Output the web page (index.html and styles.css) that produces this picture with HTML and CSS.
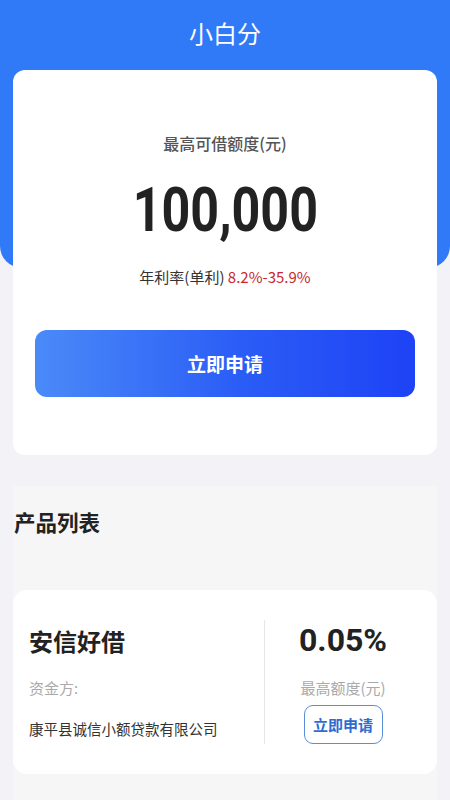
FILE: index.html
```html
<!DOCTYPE html>
<html lang="zh-CN">
<head>
    <meta charset="UTF-8">
    <meta name="viewport" content="width=device-width, initial-scale=1.0">
    <title>小白分</title>
    <link rel="stylesheet" href="styles.css">
</head>
<body>
    <div class="header">
        <div class="title">小白分</div>
    </div>

    <div class="content">
        <div class="quota-card">
            <div class="quota-label">最高可借额度(元)</div>
            <div class="quota-amount"><span class="amount-num">100,000</span></div>
            <div class="quota-rate">年利率(单利) <span class="rate-red">8.2%-35.9%</span></div>
            <button class="apply-btn">立即申请</button>
        </div>

        <div class="product-section">
            <div class="section-title">产品列表</div>

            <div class="product-card">
                <div class="product-left">
                    <div class="product-name">安信好借</div>
                    <div class="product-sub">资金方:</div>
                    <div class="product-company">康平县诚信小额贷款有限公司</div>
                </div>
                <div class="product-divider"></div>
                <div class="product-right">
                    <div class="product-rate">0.05%</div>
                    <div class="product-sub">最高额度(元)</div>
                    <button class="small-btn">立即申请</button>
                </div>
            </div>
        </div>
    </div>
</body>
</html>
```

FILE: styles.css
```css
body {
    font-family: "Noto Sans CJK SC", "Noto Sans", sans-serif;
    margin: 0;
    padding: 0;
    background-color: #f3f3f7;
    color: #222;
}

.header {
    height: 268px;
    background-color: #307af8;
    border-radius: 0 0 22px 22px;
}

.title {
    height: 66px;
    line-height: 66px;
    text-align: center;
    color: #fff;
    font-size: 24px;
}

.content {
    margin-top: -198px;
}

.quota-card {
    margin: 0 13px;
    padding: 62px 22px 58px;
    background-color: #fff;
    border-radius: 12px;
    text-align: center;
}

.quota-label {
    font-size: 16px;
    line-height: 22px;
    color: #555;
    font-weight: 500;
}

.quota-amount {
    margin-top: 21px;
    font-family: "Roboto", sans-serif;
    font-weight: bold;
    font-size: 62px;
    line-height: 70px;
    color: #222;
}

/* condensed look of the big number */
.amount-num {
    display: inline-block;
    transform: scaleX(0.81);
}

.quota-rate {
    margin-top: 21px;
    font-size: 15px;
    line-height: 22px;
    color: #333;
}

.rate-red {
    color: #c9272e;
}

.apply-btn {
    display: block;
    width: 100%;
    height: 67px;
    margin-top: 42px;
    border: none;
    border-radius: 12px;
    background: linear-gradient(90deg, #4a8af8 0%, #2a5cf6 55%, #1e42f5 100%);
    color: #fff;
    font-family: inherit;
    font-size: 19px;
    font-weight: bold;
    cursor: pointer;
}

.product-section {
    margin: 31px 13px 0;
    padding-top: 21px;
    padding-bottom: 30px;
    background-color: #f6f6f6;
}

.section-title {
    font-size: 21.5px;
    line-height: 30px;
    font-weight: bold;
    color: #222;
    padding-left: 1px;
}

.product-card {
    display: flex;
    margin-top: 53px;
    padding: 30px 16px;
    background-color: #fff;
    border-radius: 14px;
}

.product-left {
    width: 235px;
    padding-top: 3px;
}

.product-name {
    font-size: 24px;
    line-height: 36px;
    font-weight: bold;
    color: #222;
}

.product-sub {
    margin-top: 18px;
    font-size: 15px;
    line-height: 22px;
    color: #aaa;
}

.product-company {
    margin-top: 19px;
    font-size: 14.5px;
    line-height: 22px;
    color: #333;
}

.product-divider {
    width: 1px;
    background-color: #e6e6e6;
}

.product-right {
    flex: 1;
    display: flex;
    flex-direction: column;
    align-items: center;
}

.product-rate {
    font-family: "Roboto", sans-serif;
    font-size: 32px;
    line-height: 40px;
    font-weight: bold;
    color: #222;
}

.product-right .product-sub {
    margin-top: 17px;
}

.small-btn {
    margin-top: 6px;
    width: 79px;
    height: 39px;
    padding: 0;
    border: 1.5px solid #5a8fd6;
    border-radius: 9px;
    background-color: #fff;
    color: #2e6ccf;
    font-family: inherit;
    font-size: 15px;
    font-weight: bold;
    white-space: nowrap;
    cursor: pointer;
}
```
